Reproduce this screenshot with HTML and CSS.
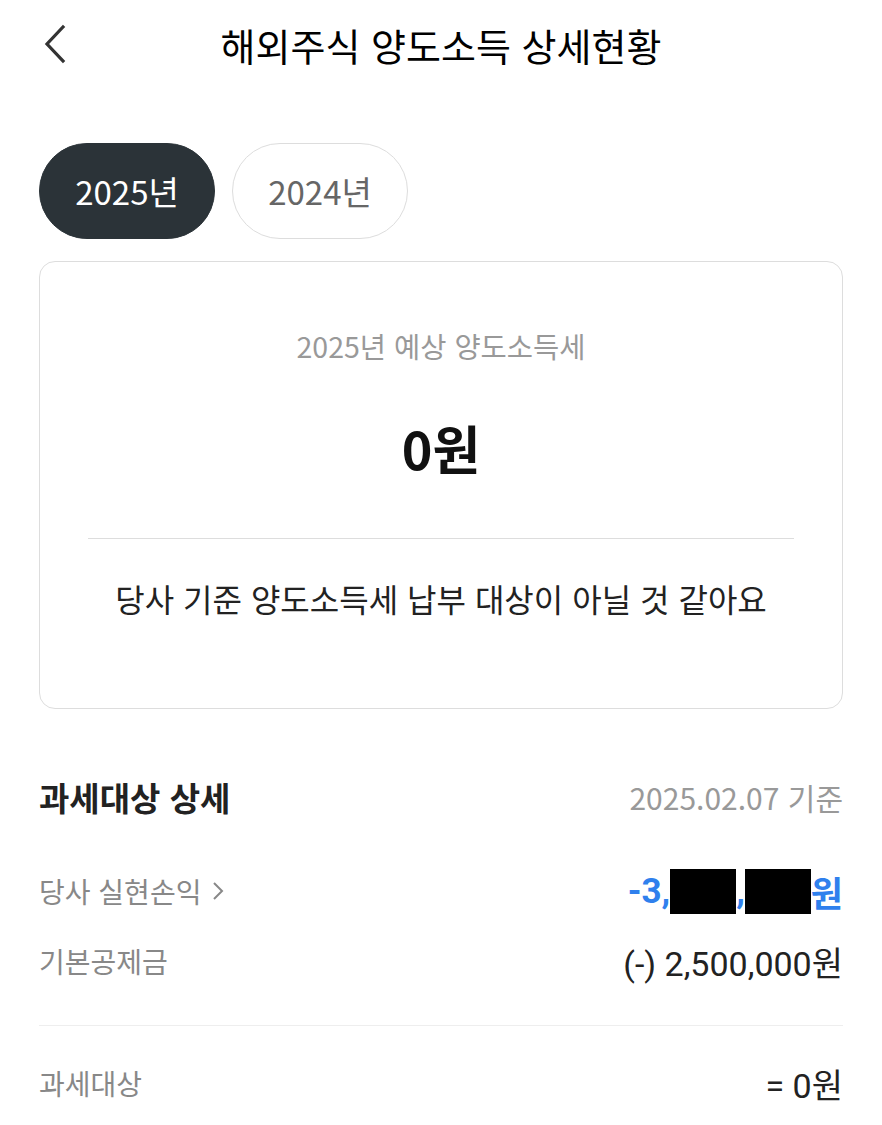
FILE: index.html
```html
<!DOCTYPE html>
<html lang="ko">

<head>
  <meta charset="UTF-8">
  <meta name="viewport" content="width=device-width, initial-scale=1.0">
  <title>해외주식 양도소득 상세현황</title>
  <link rel="stylesheet" href="styles.css">
</head>

<body>
  <header class="top-bar">
    <button class="back-btn" aria-label="뒤로">
      <svg width="28" height="40" viewBox="0 0 28 40">
        <path d="M22 3 L6 20 L22 37" fill="none" stroke="#333" stroke-width="3.2" stroke-linecap="square" />
      </svg>
    </button>
    <h1 class="title">해외주식 양도소득 상세현황</h1>
  </header>

  <div class="year-tabs">
    <button class="tab active">2025년</button>
    <button class="tab">2024년</button>
  </div>

  <section class="summary-card">
    <p class="summary-label">2025년 예상 양도소득세</p>
    <p class="summary-amount">0원</p>
    <hr class="summary-line">
    <p class="summary-note">당사 기준 양도소득세 납부 대상이 아닐 것 같아요</p>
  </section>

  <section class="detail">
    <div class="detail-head">
      <h2>과세대상 상세</h2>
      <span class="detail-date">2025.02.07 기준</span>
    </div>

    <div class="row">
      <span class="row-label">당사 실현손익
        <svg class="chev" width="14" height="22" viewBox="0 0 14 22">
          <path d="M3 3 L11 11 L3 19" fill="none" stroke="#888" stroke-width="2" />
        </svg>
      </span>
      <span class="row-value profit">-3,<span class="mask"></span>,<span class="mask"></span>원</span>
    </div>
    <div class="row">
      <span class="row-label">기본공제금</span>
      <span class="row-value">(-) 2,500,000원</span>
    </div>

    <hr class="detail-line">

    <div class="row">
      <span class="row-label">과세대상</span>
      <span class="row-value">= 0원</span>
    </div>
  </section>
</body>

</html>
```

FILE: styles.css
```css
body {
  font-family: 'Noto Sans CJK KR', 'Noto Sans', sans-serif;
  background-color: #fff;
  color: #111;
  margin: 0;
  padding: 0 39px;
}

p,
h1,
h2 {
  margin: 0;
}

.top-bar {
  position: relative;
  height: 88px;
  display: flex;
  align-items: center;
  justify-content: center;
}

.back-btn {
  position: absolute;
  left: 2px;
  top: 24px;
  border: 0;
  background: none;
  padding: 0;
}

.title {
  font-size: 38px;
  font-weight: 400;
  color: #000;
}

.year-tabs {
  display: flex;
  gap: 17px;
  margin-top: 55px;
}

.tab {
  width: 176px;
  height: 96px;
  border-radius: 48px;
  border: 1.5px solid #ddd;
  background: #fff;
  color: #666;
  font-family: inherit;
  font-size: 33px;
  padding: 0;
}

.tab.active {
  background: #2b3338;
  border-color: #2b3338;
  color: #fff;
}

.summary-card {
  margin-top: 22px;
  border: 1.5px solid #ddd;
  border-radius: 16px;
  height: 448px;
  box-sizing: border-box;
  padding: 63px 48px 0;
  text-align: center;
}

.summary-label {
  font-size: 28.5px;
  color: #999;
}

.summary-amount {
  font-size: 52px;
  font-weight: 700;
  color: #111;
  margin-top: 44px;
}

.summary-line {
  border: 0;
  border-top: 1.5px solid #ddd;
  margin: 53px 0 0;
}

.summary-note {
  font-size: 32px;
  color: #222;
  margin-top: 36px;
}

.detail {
  margin-top: 66px;
}

.detail-head {
  display: flex;
  justify-content: space-between;
  align-items: center;
  height: 44px;
}

.detail-head h2 {
  font-size: 33px;
  font-weight: 700;
  color: #222;
}

.detail-date {
  font-size: 30px;
  color: #999;
}

.row {
  display: flex;
  justify-content: space-between;
  align-items: center;
  height: 70px;
}

.detail-head + .row {
  margin-top: 37px;
}

.row-label {
  font-size: 28px;
  color: #888;
  display: flex;
  align-items: center;
  gap: 10px;
}

.row-value {
  font-family: Roboto, 'Noto Sans CJK KR', sans-serif;
  font-size: 34px;
  color: #222;
  display: flex;
  align-items: center;
}

.row-value.profit {
  color: #2f80ed;
  font-weight: 700;
  font-size: 35px;
}

.mask {
  display: inline-block;
  width: 66px;
  height: 45px;
  background: #000;
}

.detail-line {
  border: 0;
  border-top: 1.5px solid #eee;
  margin: 29px 0 22px;
}
```
